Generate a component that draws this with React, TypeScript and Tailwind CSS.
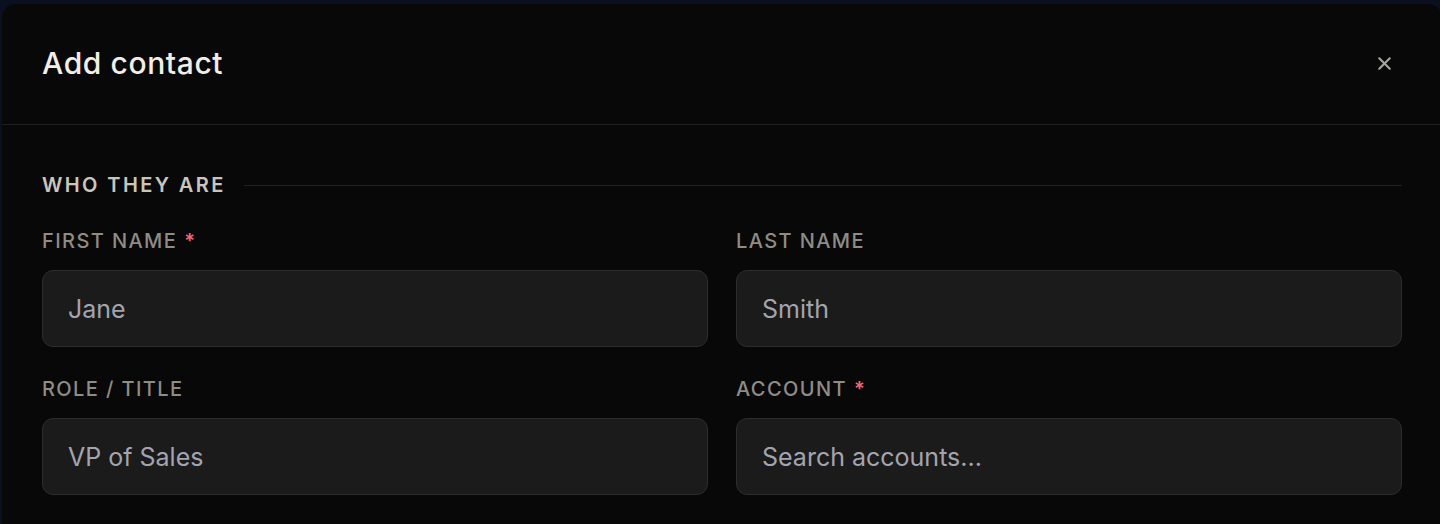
import { X } from 'lucide-react';

const font = { fontFamily: 'Inter, "Noto Sans", sans-serif' };

function Field({ label, required, placeholder }: { label: string; required?: boolean; placeholder: string }) {
  return (
    <div className="flex flex-col">
      <label className="flex items-center gap-[7px] h-[28px] text-[20px] font-medium uppercase tracking-[0.07em] text-[#8f8c85]">
        {label}
        {required && <span className="text-[#f0677c] text-[20px] font-semibold">*</span>}
      </label>
      <input
        className="mt-[15px] h-[77px] w-full rounded-[11px] border-[1.5px] border-[#2d2d2d] bg-[#1b1b1b] px-[25px] text-[25px] text-[#d8d6d0] placeholder:text-[#a2a5b0] outline-none"
        placeholder={placeholder}
      />
    </div>
  );
}

export default function App() {
  return (
    <div className="h-[524px] w-[1440px] overflow-hidden bg-[#0b1020] pl-[2px] pt-[4px]" style={font}>
      <div className="h-[600px] w-[1440px] rounded-t-[14px] bg-[#080808]">
        {/* Header */}
        <div className="flex h-[121px] items-center justify-between border-b border-[#1e1e1e] pb-[2px] pl-[40px] pr-[47px]">
          <h2 className="text-[30px] font-medium tracking-[0.02em] text-[#f1eee7]">Add contact</h2>
          <X size={21} strokeWidth={2.4} className="text-[#a8a59d]" />
        </div>

        {/* Body */}
        <div className="px-[40px] pt-[45px]">
          <div className="flex items-center gap-[18px]">
            <span className="text-[20px] font-semibold uppercase tracking-[0.12em] text-[#c9c6bd]">Who they are</span>
            <div className="h-px flex-1 bg-[#222222]" />
          </div>

          <div className="mt-[27px] grid grid-cols-2 gap-x-[28px] gap-y-[28px]">
            <Field label="First name" required placeholder="Jane" />
            <Field label="Last name" placeholder="Smith" />
            <Field label="Role / Title" placeholder="VP of Sales" />
            <Field label="Account" required placeholder="Search accounts..." />
          </div>
        </div>
      </div>
    </div>
  );
}
